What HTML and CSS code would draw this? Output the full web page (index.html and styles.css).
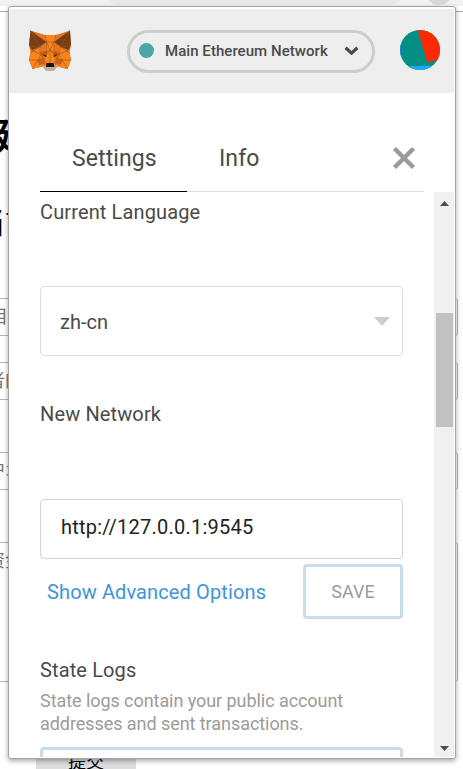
FILE: index.html
```html
<!DOCTYPE html>
<html lang="en">
<head>
<meta charset="utf-8">
<title>Settings</title>
<link rel="stylesheet" href="styles.css">
</head>
<body>
<div class="page">
  <div class="toolbar"><span class="omnibox"></span><span class="avatar"></span></div>
  <h1 class="page-title">创建</h1>
  <h2 class="page-subtitle">当前</h2>
  <div class="field field-1">项目</div>
  <div class="field field-2">者的</div>
  <div class="field field-3">户地</div>
  <div class="field field-4">资金</div>
  <div class="submit">提交</div>
</div>

<div class="popup">
  <header class="header">
    <svg class="fox" viewBox="0 0 44 42">
      <path fill="#e27625" d="M2.500 .5 17 5h11L42 .5l1 15-1.500 7 1.500 7-3.500 9.500-10-2.500-4 4h-7l-4-4-10 2.500L1 29.500l1.500-7L1 15.500z"/>
      <path fill="#f6851b" d="M17 5h11l-2 15 1 13-5 2-5-2 1-13zM2.500 23l8-5 3 9 3 9-12 3L1 30zM41.500 23l-8-5-3 9-3 9 12 3 3.500-9z"/>
      <path fill="#763d16" d="m2.500 .5 16 11.500L11 17l-7 3-3-5zM42 .5 26 12l7.500 5 7 3L43 15z"/>
      <path fill="#cd6116" d="m9 30 6-2 2 6-6 1zM35 30l-6-2-2 6 6 1zM11 22l7-1 1 6-6-2zM33 22l-7-1-1 6 6-2z"/>
      <path fill="#c0ad9e" d="m14 35 4 1h8l4-1-4 6h-8z"/>
      <path fill="#161616" d="M18.500 33h7l1 4h-8.500zM14 24.500l4 .5v2zM30 24.500l-4 .5v2z"/>
      <path fill="none" stroke="#a85413" stroke-width=".6" d="m2.500 .5 10 17L1 15.500M42 .5l-10 17 11-2M17 5l1.500 7L22 20l4-8 2-7M2.500 23l16-11v15M41.500 23 26 12v15M1 30h12l9-10 9 10h12M4.500 38.500 13 25l5 8M39.500 38.500 31 25l-5 8M22 20v13M18.500 12H26M4 20l9 5 9-5 9 5 9-5"/>
    </svg>
    <div class="network">
      <span class="dot"></span>
      <span class="network-name">Main Ethereum Network</span>
      <svg class="chevron" viewBox="0 0 14 9"><path d="m1.500 1.500 5.500 5 5.500-5"/></svg>
    </div>
    <svg class="identicon" viewBox="0 0 40 40">
      <defs><clipPath id="disc"><circle cx="20" cy="20" r="20"/></clipPath></defs>
      <g clip-path="url(#disc)">
        <path fill="#038e86" d="M0 0h40v40H0z"/>
        <path fill="#fb2a04" d="M17.500 0H40v29.500L27.500 32.500z"/>
        <path fill="#1caaf2" d="m0 36.500 31-1L30 40H0z"/>
        <path fill="#1c80dc" d="M0 13h1v14H0zM14 0h4v1h-4z"/>
      </g>
    </svg>
  </header>

  <nav class="tabs">
    <div class="tab active"><span class="tab-text settings-text">Settings</span></div>
    <div class="tab"><span class="tab-text info-text">Info</span></div>
    <svg class="close" viewBox="0 0 24 24"><path d="m2.500 2.500 19 19m0-19-19 19"/></svg>
  </nav>

  <div class="body">
    <main class="content">
      <div class="label">Current Language</div>
      <div class="select"><span>zh-cn</span><i class="caret"></i></div>
      <div class="label label-network">New Network</div>
      <div class="input">http://127.0.0.1:9545</div>
      <div class="actions"><a class="advanced">Show Advanced Options</a><div class="save">SAVE</div></div>
      <div class="label label-logs">State Logs</div>
      <p class="description">State logs contain your public account<br>addresses and sent transactions.</p>
      <div class="next-button"></div>
    </main>
    <div class="scrollbar">
      <svg class="arrow" viewBox="0 0 9 5"><path d="m0 5 4.500-5L9 5z"/></svg>
      <div class="thumb"></div>
      <svg class="arrow down" viewBox="0 0 9 5"><path d="M0 0h9L4.500 5z"/></svg>
    </div>
  </div>
</div>
</body>
</html>
```
FILE: styles.css
```css
* { box-sizing: border-box; }
body {
  margin: 0;
  width: 463px;
  height: 769px;
  overflow: hidden;
  background: #fff;
  font-family: Roboto, "Noto Sans CJK SC", sans-serif;
  color: #4a4a4a;
}
.page { height: 769px; overflow: hidden; color: #000; }
.toolbar {
  display: flex;
  align-items: flex-end;
  justify-content: flex-end;
  gap: 21px;
  height: 12px;
  padding-right: 10px;
  padding-bottom: 6px;
  border-bottom: 1px solid #a8a8a8;
  background: linear-gradient(#f1f3f4 6px, #fff 6px);
}
.omnibox { width: 300px; height: 28px; border-radius: 14px; background: #e8eaed; }
.avatar { width: 28px; height: 28px; border-radius: 50%; background: #d8d8d8; }
.page-title, .page-subtitle { margin: 0; white-space: nowrap; }
.page-title { margin: 101px 0 0 -40px; font-size: 36px; line-height: 48px; }
.page-subtitle { margin: 41px 0 0 -24px; font-size: 29px; line-height: 44px; font-weight: 400; }
.field {
  width: 478px;
  height: 38px;
  margin-left: -20px;
  border: 1px solid #b5b5b5;
  border-radius: 3px;
  color: #757575;
  font-size: 18px;
  line-height: 36px;
}
.field-1 { margin-top: 52px; padding-left: 1px; }
.field-1, .field-2, .field-3 { text-indent: -10px; }
.field-2 { margin-top: 26px; padding-left: 16px; }
.field-3 { margin-top: 52px; padding-left: 17px; }
.field-4 { height: 140px; margin-top: 52px; padding-left: 6px; }
.submit {
  width: 100px;
  height: 32px;
  margin: 65px 0 0 36px;
  background: #ddd;
  font-size: 18px;
  line-height: 29px;
  text-align: center;
}
.popup {
  position: absolute;
  top: 6px;
  left: 8px;
  width: 448px;
  height: 753px;
  padding-top: 2px;
  overflow: hidden;
  border: 1px solid #a5a5a5;
  border-radius: 3px;
  background: #fff;
  box-shadow: 0 2px 5px rgba(0, 0, 0, .35);
}
.header {
  display: flex;
  align-items: center;
  width: 445px;
  height: 84px;
  padding: 0 14px 0 19px;
  background: #eee;
}
.fox { width: 44px; height: 42px; margin-top: -1px; }
.network {
  display: flex;
  align-items: center;
  width: 248px;
  height: 43px;
  margin-left: 55px;
  padding: 0 13px 0 9px;
  border: 3px solid #cdcdcd;
  border-radius: 22px;
}
.dot { width: 15px; height: 15px; margin-top: -1px; border-radius: 50%; background: #4aa6a7; }
.network-name {
  margin-left: 11px;
  font-size: 15px;
  line-height: 20px;
  font-weight: 500;
  letter-spacing: .05px;
  white-space: nowrap;
}
.chevron { width: 15px; height: 10px; margin: -1px 0 0 auto; }
.chevron path { fill: none; stroke: #4a4a4a; stroke-width: 3; }
.identicon { width: 40px; height: 40px; margin-left: 25px; margin-top: -2px; }
.tabs {
  display: flex;
  width: 384px;
  height: 99px;
  margin-left: 31px;
  padding-top: 34px;
  border-bottom: 1px solid #dedede;
}
.tab { width: 147px; height: 65px; padding: 17px 0 0 32px; font-size: 23px; line-height: 30px; }
.tab.active { border-bottom: 1px solid #000; }
.tab-text { letter-spacing: .1px; }
.close { width: 24px; height: 24px; margin: 19px 8px 0 auto; }
.close path { stroke: #9b9b9b; stroke-width: 4.500; }
.body { display: flex; width: 445px; height: 565px; }
.content { width: 363px; height: 565px; margin-left: 31px; overflow: hidden; }
.label { margin-top: 8px; font-size: 20px; line-height: 24px; letter-spacing: .13px; }
.select {
  display: flex;
  align-items: center;
  justify-content: space-between;
  height: 70px;
  margin-top: 62px;
  padding: 0 12px 0 20px;
  border: 1px solid #dedede;
  border-radius: 4px;
  font-size: 20px;
  line-height: 26px;
}
.select span { margin: 2px 0 0 -1px; }
.caret { border: 8px solid transparent; border-top: 9px solid #cdcdcd; border-bottom: 0; }
.label-network { margin-top: 46px; }
.input {
  height: 60px;
  margin-top: 73px;
  padding-left: 20px;
  border: 1px solid #d0d5dc;
  border-radius: 4px;
  color: #222;
  font-size: 20px;
  line-height: 54px;
  letter-spacing: .23px;
}
.actions { display: flex; justify-content: space-between; margin-top: 5px; padding-left: 7px; }
.advanced { color: #3c96dc; font-size: 20px; line-height: 57px; height: 55px; letter-spacing: .12px; }
.save {
  width: 100px;
  height: 55px;
  border: 3px solid #c7ddeb;
  border-radius: 4px;
  color: #9b9b9b;
  font-size: 18px;
  line-height: 49px;
  text-align: center;
}
.label-logs { margin-top: 39px; }
.description { margin: 7px 0 0; color: #9b9b9b; font-size: 18px; line-height: 23px; letter-spacing: -.06px; white-space: nowrap; }
.next-button { height: 55px; margin-top: 12px; border: 3px solid #c7ddeb; border-radius: 4px; }
.scrollbar {
  display: flex;
  flex-direction: column;
  width: 20px;
  height: 565px;
  margin-left: 31px;
  padding: 9px 1px 6px 2px;
  background: #f0f0f0;
}
.arrow { width: 9px; height: 5px; margin-left: 4px; fill: #505050; }
.thumb { height: 114px; margin-top: 107px; background: #c1c1c1; }
.down { margin-top: auto; }
```
